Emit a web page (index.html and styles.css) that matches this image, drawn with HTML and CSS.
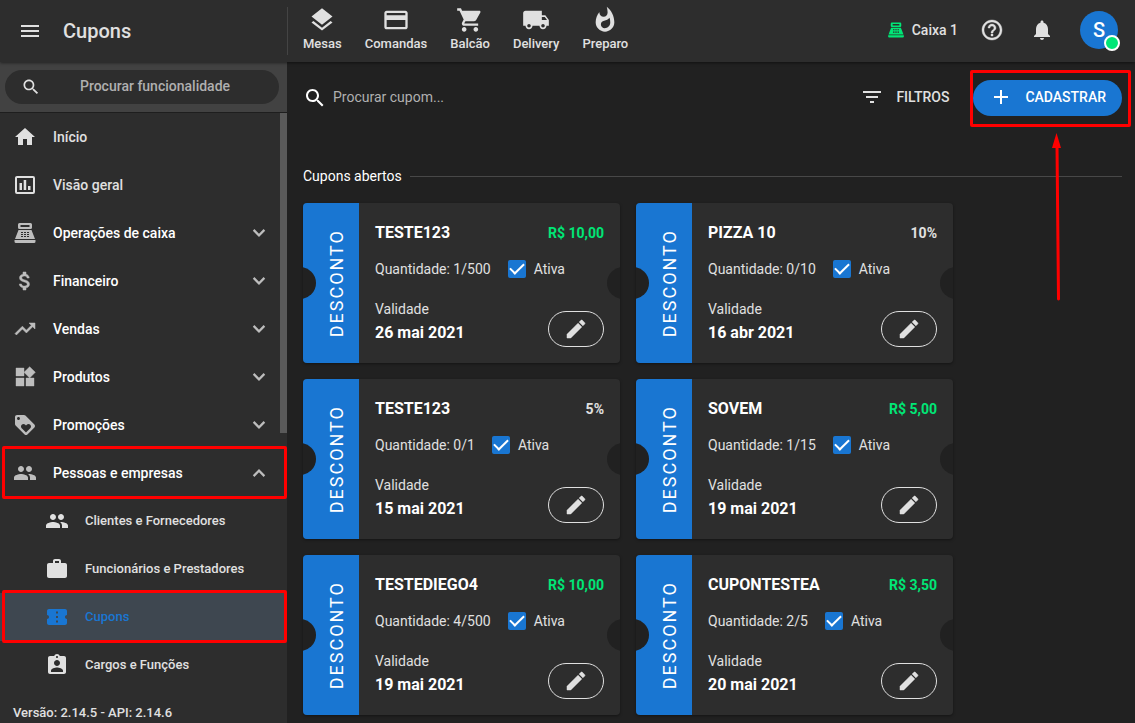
FILE: index.html
```html
<!DOCTYPE html>
<html lang="pt-BR">
<head>
<meta charset="utf-8">
<title>Cupons</title>
<meta name="viewport" content="width=device-width, initial-scale=1">
<link rel="stylesheet" href="styles.css">
</head>
<body>
<svg class="sprite" aria-hidden="true">
  <symbol id="i-menu" viewBox="0 0 24 24"><path d="M3 18h18v-2H3v2zm0-5h18v-2H3v2zm0-7v2h18V6H3z"/></symbol>
  <symbol id="i-search" viewBox="0 0 24 24"><path d="M15.5 14h-.79l-.28-.27C15.41 12.59 16 11.11 16 9.5 16 5.91 13.09 3 9.5 3S3 5.91 3 9.5 5.91 16 9.5 16c1.61 0 3.09-.59 4.23-1.57l.27.28v.79l5 4.99L20.49 19l-4.99-5zm-6 0C7.01 14 5 11.99 5 9.5S7.01 5 9.5 5 14 7.01 14 9.5 11.99 14 9.5 14z"/></symbol>
  <symbol id="i-home" viewBox="0 0 24 24"><path d="M10 20v-6h4v6h5v-8h3L12 3 2 12h3v8z"/></symbol>
  <symbol id="i-chart" viewBox="0 0 24 24"><path fill-rule="evenodd" d="M4 3h16a2 2 0 0 1 2 2v14a2 2 0 0 1-2 2H4a2 2 0 0 1-2-2V5c0-1.1.9-2 2-2zm0 2v14h16V5H4zM6.500 10h2.500v7H6.500zM10.700 7h2.500v10h-2.500zM15 13h2.500v4H15z"/></symbol>
  <symbol id="i-register" viewBox="0 0 24 24"><path fill-rule="evenodd" d="M6.500 2h11A1.500 1.500 0 0 1 19 3.500v3A1.500 1.500 0 0 1 17.500 8h-11A1.500 1.500 0 0 1 5 6.500v-3A1.500 1.500 0 0 1 6.500 2zM7.500 4v2h9V4zM5.500 9h13l3.500 9H2zM8 11v1h2v-1zm3 0v1h2v-1zm3 0v1h2v-1zM8 13v1h2v-1zm3 0v1h2v-1zm3 0v1h2v-1zM8 15v1h2v-1zm3 0v1h2v-1zm3 0v1h2v-1zM1.500 19h21v1.500a1.500 1.500 0 0 1-1.500 1.500H3a1.500 1.500 0 0 1-1.500-1.500z"/></symbol>
  <symbol id="i-money" viewBox="0 0 24 24"><path stroke="currentColor" stroke-width=".5" d="M11.800 10.900c-2.270-.59-3-1.200-3-2.150 0-1.090 1.010-1.850 2.700-1.850 1.780 0 2.440.85 2.500 2.100h2.210c-.07-1.720-1.120-3.300-3.210-3.810V3h-3v2.160c-1.940.42-3.500 1.680-3.500 3.610 0 2.310 1.910 3.460 4.700 4.130 2.500.6 3 1.480 3 2.410 0 .69-.49 1.790-2.700 1.790-2.060 0-2.870-.92-2.980-2.100h-2.200c.12 2.190 1.760 3.420 3.680 3.830V21h3v-2.150c1.950-.37 3.500-1.500 3.500-3.550 0-2.840-2.430-3.810-4.700-4.400z"/></symbol>
  <symbol id="i-trend" viewBox="0 0 24 24"><path stroke="currentColor" stroke-width=".5" d="M16 6l2.290 2.290-4.880 4.880-4-4L2 16.590 3.410 18l6-6 4 4 6.300-6.290L22 12V6z"/></symbol>
  <symbol id="i-widgets" viewBox="0 0 24 24"><path stroke="currentColor" stroke-width=".4" d="M13 13v8h8v-8h-8zM3 21h8v-8H3v8zM3 3v8h8V3H3zm13.660-1.310L11 7.340 16.660 13l5.660-5.660z"/></symbol>
  <symbol id="i-loyalty" viewBox="0 0 24 24"><path d="M21.410 11.580l-9-9C12.050 2.220 11.550 2 11 2H4c-1.100 0-2 .9-2 2v7c0 .55.22 1.050.59 1.420l9 9c.36.36.86.58 1.410.58.55 0 1.050-.22 1.410-.59l7-7c.37-.36.59-.86.59-1.410 0-.55-.23-1.060-.59-1.420zM5.500 7C4.670 7 4 6.330 4 5.500S4.670 4 5.500 4 7 4.670 7 5.500 6.330 7 5.500 7zm11.770 8.270L13 19.540l-4.270-4.270C8.280 14.810 8 14.190 8 13.500c0-1.380 1.120-2.500 2.500-2.500.69 0 1.320.28 1.770.74l.73.72.73-.73c.45-.45 1.080-.73 1.770-.73 1.380 0 2.500 1.120 2.500 2.500 0 .69-.28 1.320-.73 1.770z"/></symbol>
  <symbol id="i-people" viewBox="0 0 24 24"><path d="M16 11c1.660 0 2.990-1.340 2.990-3S17.660 5 16 5c-1.660 0-3 1.340-3 3s1.340 3 3 3zm-8 0c1.660 0 2.990-1.340 2.990-3S9.660 5 8 5C6.340 5 5 6.340 5 8s1.340 3 3 3zm0 2c-2.330 0-7 1.170-7 3.500V19h14v-2.500c0-2.330-4.670-3.500-7-3.500zm8 0c-.29 0-.62.02-.97.05 1.160.84 1.970 1.970 1.970 3.450V19h6v-2.500c0-2.330-4.670-3.500-7-3.500z"/></symbol>
  <symbol id="i-work" viewBox="0 0 24 24"><path d="M20 6h-4V4c0-1.110-.89-2-2-2h-4c-1.110 0-2 .89-2 2v2H4c-1.110 0-1.990.89-1.990 2L2 19c0 1.110.89 2 2 2h16c1.110 0 2-.89 2-2V8c0-1.110-.89-2-2-2zm-6 0h-4V4h4v2z"/></symbol>
  <symbol id="i-ticket" viewBox="0 0 24 24"><path d="M22 10V6c0-1.110-.9-2-2-2H4c-1.100 0-1.990.89-1.990 2v4c1.100 0 1.990.9 1.990 2s-.89 2-2 2v4c0 1.100.9 2 2 2h16c1.100 0 2-.9 2-2v-4c-1.100 0-2-.9-2-2s.9-2 2-2zm-9 7.500h-2v-2h2v2zm0-4.500h-2v-2h2v2zm0-4.500h-2v-2h2v2z"/></symbol>
  <symbol id="i-badge" viewBox="0 0 24 24"><path d="M19 3h-4.180C14.400 1.840 13.300 1 12 1c-1.300 0-2.400.84-2.820 2H5c-1.100 0-2 .9-2 2v14c0 1.100.9 2 2 2h14c1.100 0 2-.9 2-2V5c0-1.100-.9-2-2-2zm-7 0c.55 0 1 .45 1 1s-.45 1-1 1-1-.45-1-1 .45-1 1-1zm0 4c1.660 0 3 1.340 3 3s-1.340 3-3 3-3-1.340-3-3 1.340-3 3-3zm6 12H6v-1.400c0-2 4-3.100 6-3.100s6 1.100 6 3.100V19z"/></symbol>
  <symbol id="i-layers" viewBox="0 0 24 24"><path d="M11.990 18.540l-7.370-5.730L3 14.070l9 7 9-7-1.630-1.270-7.380 5.740zM12 16l7.360-5.730L21 9l-9-7-9 7 1.630 1.270L12 16z"/></symbol>
  <symbol id="i-card" viewBox="0 0 24 24"><path d="M20 4H4c-1.110 0-1.990.89-1.990 2L2 18c0 1.110.89 2 2 2h16c1.110 0 2-.89 2-2V6c0-1.110-.89-2-2-2zm0 14H4v-6h16v6zm0-10H4V6h16v2z"/></symbol>
  <symbol id="i-cart" viewBox="0 0 24 24"><path d="M7 18c-1.100 0-1.990.9-1.990 2S5.900 22 7 22s2-.9 2-2-.9-2-2-2zM1 2v2h2l3.600 7.590-1.350 2.450c-.16.28-.25.61-.25.96 0 1.100.9 2 2 2h12v-2H7.420c-.14 0-.25-.11-.25-.25l.03-.12.9-1.630h7.450c.75 0 1.410-.41 1.750-1.030l3.580-6.490c.08-.14.12-.31.12-.48 0-.55-.45-1-1-1H5.210l-.94-2H1zm16 16c-1.100 0-1.990.9-1.990 2s.89 2 1.990 2 2-.9 2-2-.9-2-2-2z"/></symbol>
  <symbol id="i-truck" viewBox="0 0 24 24"><path d="M20 8h-3V4H3c-1.100 0-2 .9-2 2v11h2c0 1.660 1.340 3 3 3s3-1.340 3-3h6c0 1.660 1.340 3 3 3s3-1.340 3-3h2v-5l-3-4zM6 18.500c-.83 0-1.500-.67-1.500-1.500s.67-1.500 1.500-1.500 1.500.67 1.500 1.500-.67 1.500-1.500 1.500zm13.500-9l1.960 2.500H17V9.500h2.500zm-1.500 9c-.83 0-1.500-.67-1.500-1.500s.67-1.500 1.500-1.500 1.500.67 1.500 1.500-.67 1.500-1.500 1.500z"/></symbol>
  <symbol id="i-fire" viewBox="0 0 24 24"><path d="M13.500.67s.74 2.650.74 4.800c0 2.060-1.350 3.730-3.410 3.730-2.070 0-3.630-1.670-3.630-3.730l.03-.36C5.210 7.510 4 10.620 4 14c0 4.420 3.580 8 8 8s8-3.580 8-8C20 8.610 17.410 3.800 13.500.67zM11.710 19c-1.780 0-3.220-1.400-3.220-3.140 0-1.620 1.050-2.760 2.810-3.120 1.770-.36 3.600-1.210 4.620-2.580.39 1.290.59 2.650.59 4.040 0 2.650-2.150 4.800-4.800 4.800z"/></symbol>
  <symbol id="i-help" viewBox="0 0 24 24"><path stroke="currentColor" stroke-width=".4" d="M11 18h2v-2h-2v2zm1-16C6.480 2 2 6.480 2 12s4.480 10 10 10 10-4.480 10-10S17.520 2 12 2zm0 18c-4.410 0-8-3.590-8-8s3.590-8 8-8 8 3.590 8 8-3.590 8-8 8zm0-14c-2.210 0-4 1.790-4 4h2c0-1.100.9-2 2-2s2 .9 2 2c0 2-3 1.750-3 5h2c0-2.250 3-2.500 3-5 0-2.210-1.790-4-4-4z"/></symbol>
  <symbol id="i-bell" viewBox="0 0 24 24"><path d="M12 22c1.100 0 2-.9 2-2h-4c0 1.100.89 2 2 2zm6-6v-5c0-3.070-1.640-5.640-4.500-6.320V4c0-.83-.67-1.500-1.500-1.500s-1.500.67-1.500 1.500v.68C7.630 5.360 6 7.920 6 11v5l-2 2v1h16v-1l-2-2z"/></symbol>
  <symbol id="i-filter" viewBox="0 0 24 24"><path d="M10 18h4v-2h-4v2zM3 6v2h18V6H3zm3 7h12v-2H6v2z"/></symbol>
  <symbol id="i-plus" viewBox="0 0 24 24"><path d="M19 13h-6v6h-2v-6H5v-2h6V5h2v6h6v2z"/></symbol>
  <symbol id="i-edit" viewBox="0 0 24 24"><path stroke="currentColor" stroke-width=".5" d="M3 17.250V21h3.750L17.810 9.940l-3.750-3.750L3 17.250zM20.710 7.040c.39-.39.39-1.020 0-1.410l-2.340-2.340c-.39-.39-1.020-.39-1.410 0l-1.830 1.830 3.750 3.750 1.830-1.830z"/></symbol>
  <symbol id="i-down" viewBox="0 0 24 24"><path d="M16.590 8.090L12 12.670 7.410 8.090 5.800 9.700l6.200 6.200 6.200-6.200z"/></symbol>
  <symbol id="i-up" viewBox="0 0 24 24"><path d="M12 8.100l-6.200 6.200 1.610 1.610L12 11.330l4.590 4.580 1.610-1.610z"/></symbol>
</svg>

<header class="topbar">
  <div class="brand">
    <button class="icon-btn" type="button" aria-label="Menu"><svg class="icon"><use href="#i-menu"/></svg></button>
    <h1 class="title">Cupons</h1>
  </div>
  <nav class="shortcuts">
    <a class="shortcut" href="#"><svg class="icon-lg"><use href="#i-layers"/></svg>Mesas</a>
    <a class="shortcut" href="#"><svg class="icon-lg"><use href="#i-card"/></svg>Comandas</a>
    <a class="shortcut" href="#"><svg class="icon-lg"><use href="#i-cart"/></svg>Balcão</a>
    <a class="shortcut" href="#"><svg class="icon-lg"><use href="#i-truck"/></svg>Delivery</a>
    <a class="shortcut" href="#"><svg class="icon-lg"><use href="#i-fire"/></svg>Preparo</a>
  </nav>
  <div class="account">
    <button class="cashier" type="button"><svg class="icon-sm"><use href="#i-register"/></svg>Caixa 1</button>
    <button class="icon-btn" type="button" aria-label="Ajuda"><svg class="icon"><use href="#i-help"/></svg></button>
    <button class="icon-btn" type="button" aria-label="Notificações"><svg class="icon"><use href="#i-bell"/></svg></button>
    <button class="avatar" type="button">S<span class="status"></span></button>
  </div>
</header>

<div class="layout">
  <aside class="sidebar">
    <div class="side-search">
      <label class="side-field"><svg class="icon-sm"><use href="#i-search"/></svg><input type="text" placeholder="Procurar funcionalidade" aria-label="Procurar funcionalidade"></label>
    </div>
    <nav class="menu">
      <a class="item" href="#"><svg class="icon"><use href="#i-home"/></svg><span>Início</span></a>
      <a class="item" href="#"><svg class="icon"><use href="#i-chart"/></svg><span>Visão geral</span></a>
      <button class="item group" type="button"><svg class="icon"><use href="#i-register"/></svg><span>Operações de caixa</span><svg class="chevron"><use href="#i-down"/></svg></button>
      <button class="item group" type="button"><svg class="icon"><use href="#i-money"/></svg><span>Financeiro</span><svg class="chevron"><use href="#i-down"/></svg></button>
      <button class="item group" type="button"><svg class="icon"><use href="#i-trend"/></svg><span>Vendas</span><svg class="chevron"><use href="#i-down"/></svg></button>
      <button class="item group" type="button"><svg class="icon"><use href="#i-widgets"/></svg><span>Produtos</span><svg class="chevron"><use href="#i-down"/></svg></button>
      <button class="item group" type="button"><svg class="icon"><use href="#i-loyalty"/></svg><span>Promoções</span><svg class="chevron"><use href="#i-down"/></svg></button>
      <button class="item group marked" type="button" aria-expanded="true"><svg class="icon"><use href="#i-people"/></svg><span>Pessoas e empresas</span><svg class="chevron"><use href="#i-up"/></svg></button>
      <a class="item sub" href="#"><svg class="icon"><use href="#i-people"/></svg><span>Clientes e Fornecedores</span></a>
      <a class="item sub" href="#"><svg class="icon"><use href="#i-work"/></svg><span>Funcionários e Prestadores</span></a>
      <a class="item sub active marked" href="#"><svg class="icon"><use href="#i-ticket"/></svg><span>Cupons</span></a>
      <a class="item sub" href="#"><svg class="icon"><use href="#i-badge"/></svg><span>Cargos e Funções</span></a>
      <div class="thumb"></div>
    </nav>
    <p class="version">Versão: 2.14.5 - API: 2.14.6</p>
  </aside>

  <main class="content">
    <div class="toolbar">
      <label class="search"><svg class="icon"><use href="#i-search"/></svg><input type="text" placeholder="Procurar cupom..." aria-label="Procurar cupom"></label>
      <button class="filters" type="button"><svg class="icon"><use href="#i-filter"/></svg>FILTROS</button>
      <div class="callout">
        <button class="create" type="button"><svg class="icon"><use href="#i-plus"/></svg>CADASTRAR</button>
        <svg class="arrow" viewBox="0 0 12 168" aria-hidden="true"><path d="M6 12L7.500 166" stroke="#f00" stroke-width="3" stroke-linecap="round"/><path d="M5.500 0L10 15H1z" fill="#f00"/></svg>
      </div>
    </div>

    <h2 class="section">Cupons abertos</h2>

    <div class="coupons">
      <article class="coupon">
        <div class="band"><span>DESCONTO</span></div>
        <div class="body">
          <div class="row"><h3>TESTE123</h3><strong class="value money">R$ 10,00</strong></div>
          <div class="row qty"><span>Quantidade: 1/500</span><label><input type="checkbox" checked>Ativa</label></div>
          <div class="row foot"><p>Validade<strong>26 mai 2021</strong></p><button class="edit" type="button" aria-label="Editar"><svg class="icon"><use href="#i-edit"/></svg></button></div>
        </div>
      </article>
      <article class="coupon">
        <div class="band"><span>DESCONTO</span></div>
        <div class="body">
          <div class="row"><h3>PIZZA 10</h3><strong class="value">10%</strong></div>
          <div class="row qty"><span>Quantidade: 0/10</span><label><input type="checkbox" checked>Ativa</label></div>
          <div class="row foot"><p>Validade<strong>16 abr 2021</strong></p><button class="edit" type="button" aria-label="Editar"><svg class="icon"><use href="#i-edit"/></svg></button></div>
        </div>
      </article>
      <article class="coupon">
        <div class="band"><span>DESCONTO</span></div>
        <div class="body">
          <div class="row"><h3>TESTE123</h3><strong class="value">5%</strong></div>
          <div class="row qty"><span>Quantidade: 0/1</span><label><input type="checkbox" checked>Ativa</label></div>
          <div class="row foot"><p>Validade<strong>15 mai 2021</strong></p><button class="edit" type="button" aria-label="Editar"><svg class="icon"><use href="#i-edit"/></svg></button></div>
        </div>
      </article>
      <article class="coupon">
        <div class="band"><span>DESCONTO</span></div>
        <div class="body">
          <div class="row"><h3>SOVEM</h3><strong class="value money">R$ 5,00</strong></div>
          <div class="row qty"><span>Quantidade: 1/15</span><label><input type="checkbox" checked>Ativa</label></div>
          <div class="row foot"><p>Validade<strong>19 mai 2021</strong></p><button class="edit" type="button" aria-label="Editar"><svg class="icon"><use href="#i-edit"/></svg></button></div>
        </div>
      </article>
      <article class="coupon">
        <div class="band"><span>DESCONTO</span></div>
        <div class="body">
          <div class="row"><h3>TESTEDIEGO4</h3><strong class="value money">R$ 10,00</strong></div>
          <div class="row qty"><span>Quantidade: 4/500</span><label><input type="checkbox" checked>Ativa</label></div>
          <div class="row foot"><p>Validade<strong>19 mai 2021</strong></p><button class="edit" type="button" aria-label="Editar"><svg class="icon"><use href="#i-edit"/></svg></button></div>
        </div>
      </article>
      <article class="coupon">
        <div class="band"><span>DESCONTO</span></div>
        <div class="body">
          <div class="row"><h3>CUPONTESTEA</h3><strong class="value money">R$ 3,50</strong></div>
          <div class="row qty"><span>Quantidade: 2/5</span><label><input type="checkbox" checked>Ativa</label></div>
          <div class="row foot"><p>Validade<strong>20 mai 2021</strong></p><button class="edit" type="button" aria-label="Editar"><svg class="icon"><use href="#i-edit"/></svg></button></div>
        </div>
      </article>
    </div>
  </main>
</div>
</body>
</html>
```
FILE: styles.css
```css
:root {
  --page: #212121;
  --panel: #2d2d2d;
  --text: #e0e0e0;
  --blue: #1976d2;
  --green: #00e676;
  --mark: #f00;
}

* { box-sizing: border-box; }

body {
  margin: 0;
  height: 100vh;
  display: flex;
  flex-direction: column;
  overflow: hidden;
  background: var(--page);
  color: var(--text);
  font: 500 14px/20px Roboto, sans-serif;
}

h1, h2, h3, p { margin: 0; font-weight: 500; }
a { color: inherit; text-decoration: none; }
button { padding: 0; border: 0; background: none; color: inherit; font: inherit; cursor: pointer; }
input { min-width: 0; padding: 0; border: 0; outline: 0; background: none; color: inherit; font: inherit; }
input::placeholder { color: #b0b0b0; opacity: 1; }
svg { flex: none; fill: currentColor; }

.sprite { position: absolute; width: 0; height: 0; }
.icon { width: 24px; height: 24px; }
.icon-sm { width: 20px; height: 20px; }
.icon-lg { width: 28px; height: 28px; }
.icon-btn, .icon-btn svg { display: block; }

/* Top bar */
.topbar {
  position: relative;
  z-index: 2;
  display: flex;
  align-items: center;
  height: 62px;
  flex: none;
  padding-right: 17px;
  background: var(--panel);
  box-shadow: 0 1px 3px rgba(0, 0, 0, .5);
}
.brand {
  display: flex;
  align-items: center;
  gap: 21px;
  width: 288px;
  height: 48px;
  padding-left: 18px;
  border-right: 1px solid #444;
}
.title { font-size: 20px; line-height: 28px; }
.shortcuts { display: flex; flex: 1; gap: 23px; padding: 0 0 4px 15px; }
.shortcut {
  display: flex;
  flex-direction: column;
  align-items: center;
  font-size: 13px;
  line-height: 16px;
  gap: 2px;
}
.account { display: flex; align-items: center; gap: 26px; padding-bottom: 2px; }
.cashier { display: flex; align-items: center; gap: 7px; margin-right: -4px; }
.cashier svg { width: 18px; height: 18px; color: var(--green); }
.avatar {
  position: relative;
  width: 38px;
  height: 38px;
  border-radius: 50%;
  background: var(--blue);
  color: #fff;
  font-size: 20px;
}
.status {
  position: absolute;
  right: -2px;
  bottom: -2px;
  width: 16px;
  height: 16px;
  border: 2px solid #fff;
  border-radius: 50%;
  background: var(--green);
}

/* Sidebar */
.layout { display: flex; flex: 1; min-height: 0; }
.sidebar {
  display: flex;
  flex-direction: column;
  width: 287px;
  flex: none;
  background: var(--panel);
}
.side-search {
  padding: 8px 8px 8px 5px;
  border-bottom: 1px solid #1e1e1e;
  background: #424242;
}
.side-field {
  display: flex;
  align-items: center;
  gap: 16px;
  height: 34px;
  padding: 0 16px;
  border-radius: 17px;
  background: var(--panel);
}
.side-field input { flex: 1; padding: 0 10px 2px 0; text-align: center; }
.menu { position: relative; flex: 1; min-height: 0; }
.item {
  position: relative;
  display: flex;
  align-items: center;
  gap: 16px;
  width: 100%;
  height: 48px;
  padding: 0 16px 0 13px;
  text-align: left;
}
.item span { flex: 1; }
.group { color: #fff; }
.group svg { color: #bdbdbd; }
.chevron { width: 24px; height: 24px; }
.sub { padding-left: 45px; font-size: 13px; }
.active { background: #3e4750; color: var(--blue); }
.marked::after {
  content: "";
  position: absolute;
  inset: -3px 0 -2px 2px;
  border: 3px solid var(--mark);
  border-radius: 2px;
}
.thumb {
  position: absolute;
  top: 0;
  right: 0;
  width: 7px;
  height: 320px;
  background: #5a5a5a;
}
.version { padding: 0 13px; font-size: 13px; }

/* Content */
.content { flex: 1; min-width: 0; padding: 18px 13px 8px 16px; }
.toolbar { display: flex; align-items: center; height: 36px; }
.search { display: flex; flex: 1; align-items: center; gap: 6px; font-weight: 400; }
.search svg { color: #fff; }
.search input { flex: 1; padding-bottom: 2px; }
.filters { display: flex; align-items: center; gap: 12px; margin-right: 24px; padding-bottom: 2px; }
.callout { position: relative; }
.callout::before {
  content: "";
  position: absolute;
  inset: -10px -9px -11px -3px;
  border: 3px solid var(--mark);
  border-radius: 2px;
}
.arrow { position: absolute; top: 53px; left: 78px; width: 12px; height: 168px; }
.create {
  display: flex;
  align-items: center;
  gap: 12px;
  height: 36px;
  padding: 0 16px 2px;
  border-radius: 18px;
  background: var(--blue);
  color: #fff;
}
.section {
  display: flex;
  align-items: center;
  gap: 8px;
  margin: 50px 0 17px;
  color: #fff;
  font-size: 14px;
  font-weight: 400;
}
.section::after { content: ""; flex: 1; height: 1px; background: #484848; }

/* Coupons */
.coupons { display: grid; grid-template-columns: repeat(auto-fill, 317px); gap: 16px; }
.coupon {
  position: relative;
  display: flex;
  height: 160px;
  overflow: hidden;
  border-radius: 4px;
  background: var(--panel);
  box-shadow: 0 1px 3px rgba(0, 0, 0, .4);
}
.coupon::before, .coupon::after {
  content: "";
  position: absolute;
  top: 64px;
  width: 32px;
  height: 32px;
  border-radius: 50%;
  background: var(--page);
}
.coupon::before { left: -19px; }
.coupon::after { right: -19px; }
.band {
  display: flex;
  align-items: center;
  justify-content: center;
  width: 56px;
  padding-left: 12px;
  background: var(--blue);
  color: #fff;
  font-size: 18px;
  font-weight: 400;
  letter-spacing: 2px;
}
.band span { writing-mode: vertical-rl; transform: rotate(180deg); }
.body { display: flex; flex: 1; flex-direction: column; padding: 18px 16px 16px; }
.row { display: flex; align-items: center; justify-content: space-between; }
h3 { color: #fff; font-size: 16px; font-weight: 700; line-height: 24px; }
.value { font-weight: 700; }
.money { color: var(--green); }
.qty { justify-content: flex-start; gap: 17px; margin-top: 14px; font-weight: 400; }
.qty label { display: flex; align-items: center; gap: 8px; }
.qty input {
  appearance: none;
  width: 18px;
  height: 18px;
  margin: 0;
  border-radius: 2px;
  background: var(--blue);
  display: grid;
  place-items: center;
}
.qty input:checked::before {
  content: "";
  width: 12px;
  height: 6px;
  margin-top: -4px;
  border: solid #fff;
  border-width: 0 0 2px 2px;
  transform: rotate(-45deg);
}
.foot { flex: 1; align-items: flex-end; }
.foot p { font-weight: 400; }
.foot strong { display: block; color: #fff; font-size: 16px; font-weight: 700; line-height: 28px; }
.edit {
  display: grid;
  place-items: center;
  width: 56px;
  height: 36px;
  border: 1px solid var(--text);
  border-radius: 18px;
}
```
